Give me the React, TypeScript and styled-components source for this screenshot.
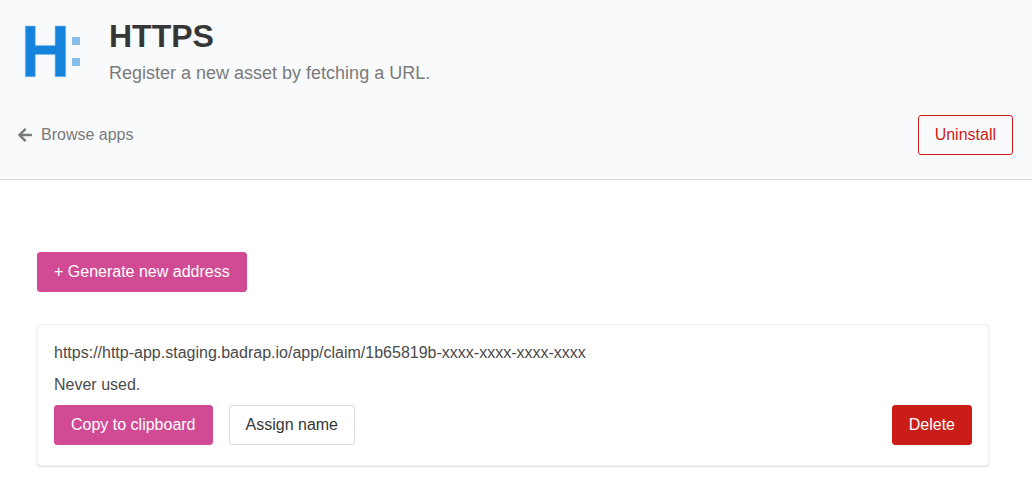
import React from "react";
import styled, { createGlobalStyle, css } from "styled-components";
import { FaArrowLeft } from "react-icons/fa";

const GlobalStyle = createGlobalStyle`
  *, *::before, *::after { box-sizing: border-box; }
  body {
    margin: 0;
    background: #fff;
    color: #4a4a4a;
    font: 16px/24px "Liberation Sans", Arial, sans-serif;
  }
`;

const Header = styled.header`
  padding: 16px 19px 24px 17px;
  background: #f9fafc;
  border-bottom: 1px solid #dbdbdb;
`;

const Brand = styled.div`
  display: flex;
  gap: 24px;
`;

const Logo = styled.svg`
  display: block;
  width: 68px;
  height: 68px;
`;

const Title = styled.h1`
  margin: 0;
  color: #363636;
  font-size: 32px;
  line-height: 40px;
  font-weight: 700;
`;

const Subtitle = styled.p`
  margin: 4px 0 0;
  color: #7a7a7a;
  font-size: 18px;
  line-height: 26px;
`;

const Row = styled.div`
  display: flex;
  align-items: center;
  justify-content: space-between;
`;

const HeaderRow = styled(Row)`
  margin-top: 29px;
`;

const BackLink = styled.a`
  display: inline-flex;
  align-items: center;
  gap: 8px;
  color: #7a7a7a;
  text-decoration: none;
`;

const variants = {
  primary: css`background: #d14b94; border-color: #d14b94; color: #fff;`,
  danger: css`background: #cb1d18; border-color: #cb1d18; color: #fff;`,
  dangerOutline: css`background: transparent; border-color: #cb1d18; color: #cb1d18;`,
  plain: css`background: #fff; border-color: #dbdbdb; color: #363636;`,
};

const Button = styled.button<{ $variant: keyof typeof variants }>`
  height: 40px;
  padding: 0 16px;
  border: 1px solid;
  border-radius: 3px;
  font: inherit;
  white-space: nowrap;
  cursor: pointer;
  ${({ $variant }) => variants[$variant]}
`;

const Main = styled.main`
  padding: 72px 43px 18px 37px;
`;

const Card = styled.section`
  margin-top: 32px;
  padding: 16px 16px 20px;
  border: 1px solid #eff1f3;
  border-radius: 4px;
  background: #fff;
  box-shadow: 0 1px 2px rgba(10, 10, 10, 0.14);
`;

const Line = styled.p`
  margin: 0 0 8px;
  overflow-wrap: anywhere;
`;

const Actions = styled.div`
  display: flex;
  gap: 16px;
`;

export default function App() {
  return (
    <>
      <GlobalStyle />
      <Header>
        <Brand>
          <Logo viewBox="0 0 68 68" aria-hidden="true">
            <path
              fill="#1583dc"
              stroke="#7fbdf0"
              strokeWidth="0.6"
              d="M8.3 10h10v19.4h19.8V10h10.6v50.7H38.1V38.6H18.3v22.1h-10z"
            />
            <path fill="#86bdeb" d="M55 21h8v8h-8zM55 42h8v8h-8z" />
          </Logo>
          <div>
            <Title>HTTPS</Title>
            <Subtitle>Register a new asset by fetching a URL.</Subtitle>
          </div>
        </Brand>
        <HeaderRow>
          <BackLink href="#apps">
            <FaArrowLeft size={16} aria-hidden="true" />
            Browse apps
          </BackLink>
          <Button type="button" $variant="dangerOutline">Uninstall</Button>
        </HeaderRow>
      </Header>
      <Main>
        <Button type="button" $variant="primary">+ Generate new address</Button>
        <Card>
          <Line>https://http-app.staging.badrap.io/app/claim/1b65819b-xxxx-xxxx-xxxx-xxxx</Line>
          <Line>Never used.</Line>
          <Row>
            <Actions>
              <Button type="button" $variant="primary">Copy to clipboard</Button>
              <Button type="button" $variant="plain">Assign name</Button>
            </Actions>
            <Button type="button" $variant="danger">Delete</Button>
          </Row>
        </Card>
      </Main>
    </>
  );
}
